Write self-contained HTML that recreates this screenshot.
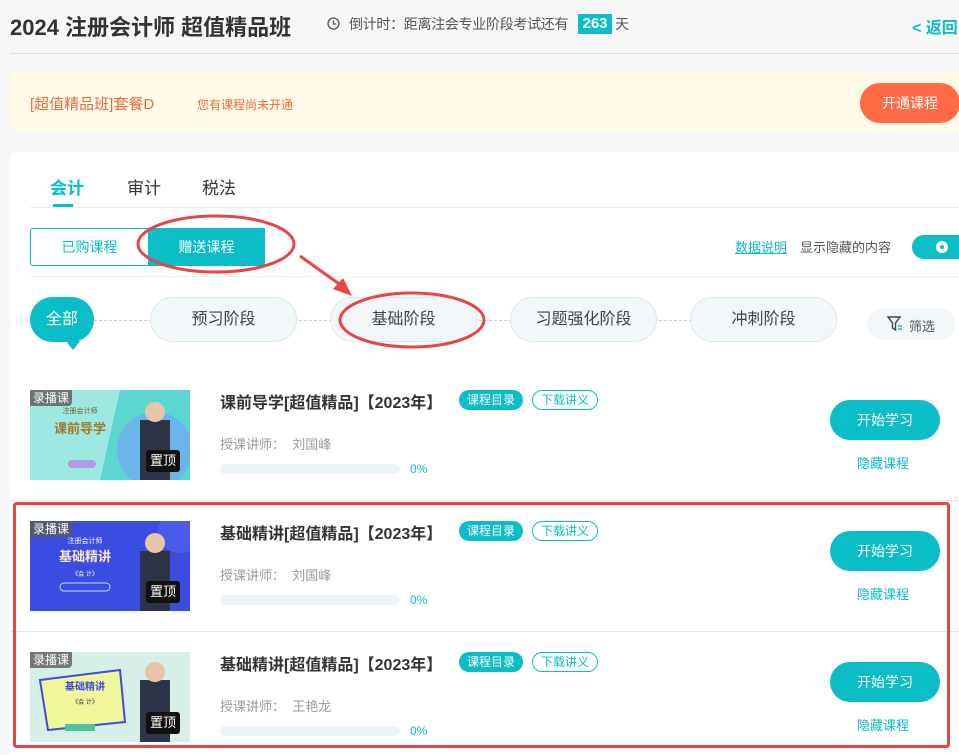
<!DOCTYPE html>
<html><head><meta charset="utf-8"><style>
*{margin:0;padding:0;box-sizing:border-box}
body{width:959px;height:755px;overflow:hidden;background:#f7f7f7;font-family:"Liberation Sans","Noto Sans CJK SC",sans-serif;position:relative;color:#333}
.a{position:absolute;white-space:nowrap}
.t{color:#0abdc6}
.pill{position:absolute;top:297px;height:45px;width:147px;border:1px solid #dbe9ee;background:#f2f7f9;border-radius:23px;text-align:center;line-height:43px;font-size:16px;color:#444}
.btn{position:absolute;left:830px;width:110px;height:40px;border-radius:20px;background:#0abdc6;color:#fff;font-size:14px;text-align:center;line-height:40px}
.hide{position:absolute;left:857px;font-size:13px;color:#0abdc6}
.thumb{position:absolute;left:30px;width:160px;height:90px}
.tag{position:absolute;left:30px;background:rgba(90,90,90,.8);color:#fff;font-size:12px;padding:0 3px;line-height:16px;border-radius:0 0 4px 0}
.top{position:absolute;left:146px;background:#111;color:#fff;font-size:13px;padding:0 4px;line-height:22px;border-radius:3px}
.ti{position:absolute;left:220px;font-size:16px;font-weight:bold;color:#333}
.b1{position:absolute;left:459px;width:64px;height:20px;border-radius:10px;background:#0abdc6;color:#fff;font-size:12px;text-align:center;line-height:20px}
.b2{position:absolute;left:532px;width:66px;height:20px;border-radius:10px;border:1px solid #0abdc6;color:#0abdc6;font-size:12px;text-align:center;line-height:18px}
.lec{position:absolute;left:220px;font-size:13px;color:#999}
.bar{position:absolute;left:220px;width:180px;height:10px;border-radius:5px;background:#edf4f7}
.pc{position:absolute;left:410px;font-size:12px;color:#0abdc6}
</style></head><body>
<div class="a" style="left:10px;top:10px;font-size:22px;font-weight:bold;color:#333">2024 注册会计师 超值精品班</div>
<svg class="a" style="left:327px;top:17px" width="13" height="13" viewBox="0 0 13 13"><circle cx="6.5" cy="6.5" r="5.5" fill="none" stroke="#555" stroke-width="1.3"/><path d="M6.5 3.5V7H9" fill="none" stroke="#555" stroke-width="1.3"/></svg>
<div class="a" style="left:349px;top:14px;font-size:14px;color:#555;letter-spacing:-0.3px">倒计时：距离注会专业阶段考试还有</div>
<div class="a" style="left:578px;top:14px;width:34px;height:20px;background:#0abdc6;color:#fff;font-weight:bold;font-size:15px;text-align:center;line-height:20px">263</div>
<div class="a" style="left:615px;top:14px;font-size:14px;color:#555">天</div>
<div class="a t" style="left:912px;top:14px;font-size:16px;font-weight:bold">&lt; 返回</div>
<div class="a" style="left:10px;top:53px;width:949px;height:1px;background:#ddd"></div>
<div class="a" style="left:10px;top:73px;width:949px;height:58px;background:#fffbe8;border-radius:6px 0 0 6px"></div>
<div class="a" style="left:30px;top:93px;font-size:15px;color:#f0683f">[超值精品班]套餐D</div>
<div class="a" style="left:197px;top:96px;font-size:12px;color:#f0683f">您有课程尚未开通</div>
<div class="a" style="left:860px;top:83px;width:100px;height:40px;border-radius:20px;background:#ff6a45;color:#fff;font-size:14px;line-height:40px;padding-left:22px">开通课程</div>
<div class="a" style="left:10px;top:152px;width:949px;height:603px;background:#fff;border-radius:6px 0 0 0"></div>
<div class="a t" style="left:50px;top:174px;font-size:17px;font-weight:bold">会计</div>
<div class="a" style="left:53px;top:204px;width:20px;height:3px;background:#0abdc6"></div>
<div class="a" style="left:127px;top:174px;font-size:17px;color:#333">审计</div>
<div class="a" style="left:202px;top:174px;font-size:17px;color:#333">税法</div>
<div class="a" style="left:30px;top:207px;width:929px;height:1px;background:#eee"></div>
<div class="a t" style="left:30px;top:228px;width:119px;height:38px;border:1px solid #0abdc6;border-radius:3px 0 0 3px;font-size:14px;text-align:center;line-height:36px">已购课程</div>
<div class="a" style="left:148px;top:228px;width:117px;height:38px;background:#0abdc6;color:#fff;font-size:14px;text-align:center;line-height:38px">赠送课程</div>
<div class="a t" style="left:735px;top:237px;font-size:13px;text-decoration:underline">数据说明 </div>
<div class="a" style="left:800px;top:237px;font-size:13px;color:#555">显示隐藏的内容</div>
<div class="a" style="left:912px;top:235px;width:60px;height:24px;border-radius:12px;background:#0abdc6"></div>
<div class="a" style="left:936px;top:241px;width:12px;height:12px;border-radius:6px;background:#fff"></div>
<div class="a" style="left:940px;top:245px;width:4px;height:4px;border-radius:2px;background:#0abdc6"></div>
<div class="a" style="left:30px;top:276px;width:929px;height:1px;background:#eee"></div>
<div class="a" style="left:94px;top:320px;width:743px;border-top:1px dashed #ccc"></div>
<div class="a" style="left:30px;top:297px;width:64px;height:45px;border-radius:23px;background:#0abdc6;color:#fff;font-size:16px;text-align:center;line-height:45px">全部</div>
<div class="a" style="left:66px;top:341px;width:0;height:0;border-left:7px solid transparent;border-right:7px solid transparent;border-top:9px solid #0abdc6"></div>
<div class="pill" style="left:150px">预习阶段</div>
<div class="pill" style="left:330px">基础阶段</div>
<div class="pill" style="left:510px">习题强化阶段</div>
<div class="pill" style="left:690px">冲刺阶段</div>
<div class="a" style="left:867px;top:308px;width:88px;height:32px;border-radius:16px;background:#f2f7f9"></div>
<svg class="a" style="left:886px;top:315px" width="18" height="18" viewBox="0 0 18 18"><path d="M2 2H14L9.5 8V15L6.5 13V8Z" fill="none" stroke="#444" stroke-width="1.4"/><path d="M12 11H16M12 14H16" stroke="#0abdc6" stroke-width="1.5"/></svg>
<div class="a" style="left:909px;top:316px;font-size:13px;color:#555">筛选</div>

<svg class="thumb" style="top:390px" viewBox="0 0 160 90"><rect width="160" height="90" fill="#5dd6d2"/><path d="M0 0H90L70 90H0Z" fill="#9ee8e2"/><circle cx="125" cy="60" r="38" fill="#6bb5ea"/><rect x="110" y="30" width="30" height="60" fill="#2d3448"/><circle cx="125" cy="22" r="10" fill="#e8c4a8"/><text x="50" y="23" font-size="7" fill="#6b5a2a" text-anchor="middle">注册会计师</text><text x="50" y="43" font-size="13" font-weight="bold" fill="#a3782a" text-anchor="middle">课前导学</text><rect x="38" y="70" width="28" height="8" rx="4" fill="#b09ae8"/></svg>
<div class="tag" style="top:390px">录播课</div><div class="top" style="top:450px">置顶</div>
<div class="ti" style="top:389px">课前导学[超值精品]【2023年】</div>
<div class="b1" style="top:390px">课程目录</div><div class="b2" style="top:390px">下载讲义</div>
<div class="lec" style="top:434px">授课讲师：&nbsp; 刘国峰</div>
<div class="bar" style="top:464px"></div><div class="pc" style="top:462px">0%</div>
<div class="btn" style="top:400px">开始学习</div><div class="hide" style="top:453px">隐藏课程</div>
<div class="a" style="left:10px;top:500px;width:949px;height:1px;background:#e8e8e8"></div>

<svg class="thumb" style="top:521px" viewBox="0 0 160 90"><rect width="160" height="90" fill="#3b4ce0"/><circle cx="150" cy="10" r="22" fill="#4a5bea"/><rect x="110" y="30" width="30" height="60" fill="#2d3448"/><circle cx="125" cy="22" r="10" fill="#e8c4a8"/><text x="55" y="22" font-size="7" fill="#fff" text-anchor="middle">注册会计师</text><text x="55" y="40" font-size="13" font-weight="bold" fill="#fde6d0" text-anchor="middle">基础精讲</text><text x="55" y="55" font-size="6" fill="#fff" text-anchor="middle">《会 计》</text><rect x="30" y="62" width="50" height="8" rx="4" fill="none" stroke="#fff" stroke-width=".7"/></svg>
<div class="tag" style="top:521px">录播课</div><div class="top" style="top:581px">置顶</div>
<div class="ti" style="top:520px">基础精讲[超值精品]【2023年】</div>
<div class="b1" style="top:521px">课程目录</div><div class="b2" style="top:521px">下载讲义</div>
<div class="lec" style="top:565px">授课讲师：&nbsp; 刘国峰</div>
<div class="bar" style="top:595px"></div><div class="pc" style="top:593px">0%</div>
<div class="btn" style="top:531px">开始学习</div><div class="hide" style="top:584px">隐藏课程</div>
<div class="a" style="left:10px;top:631px;width:949px;height:1px;background:#e8e8e8"></div>

<svg class="thumb" style="top:652px" viewBox="0 0 160 90"><rect width="160" height="90" fill="#d6efe8"/><path d="M10 28L90 18L95 70L18 78Z" fill="#f3f59a" stroke="#3b4ce0" stroke-width="2"/><rect x="110" y="28" width="30" height="62" fill="#2d3448"/><circle cx="125" cy="20" r="10" fill="#e8c4a8"/><text x="55" y="38" font-size="10" font-weight="bold" fill="#3b4ce0" text-anchor="middle">基础精讲</text><text x="55" y="52" font-size="6" fill="#333" text-anchor="middle">《会 计》</text><rect x="35" y="72" width="30" height="7" fill="#4cc4a0"/></svg>
<div class="tag" style="top:652px">录播课</div><div class="top" style="top:712px">置顶</div>
<div class="ti" style="top:651px">基础精讲[超值精品]【2023年】</div>
<div class="b1" style="top:652px">课程目录</div><div class="b2" style="top:652px">下载讲义</div>
<div class="lec" style="top:696px">授课讲师：&nbsp; 王艳龙</div>
<div class="bar" style="top:726px"></div><div class="pc" style="top:724px">0%</div>
<div class="btn" style="top:662px">开始学习</div><div class="hide" style="top:715px">隐藏课程</div>

<svg class="a" style="left:0;top:0" width="959" height="755">
<ellipse cx="216" cy="244" rx="78" ry="28" fill="none" stroke="#e84545" stroke-width="3"/>
<path d="M300 256L342 286" stroke="#e84545" stroke-width="3"/>
<path d="M352 296L333 289L343 278Z" fill="#e84545"/>
<ellipse cx="412" cy="320" rx="72" ry="27" fill="none" stroke="#e84545" stroke-width="3"/>
<rect x="14.5" y="503.5" width="934" height="243" fill="none" stroke="#e84545" stroke-width="3" rx="2"/>
</svg>
</body></html>
